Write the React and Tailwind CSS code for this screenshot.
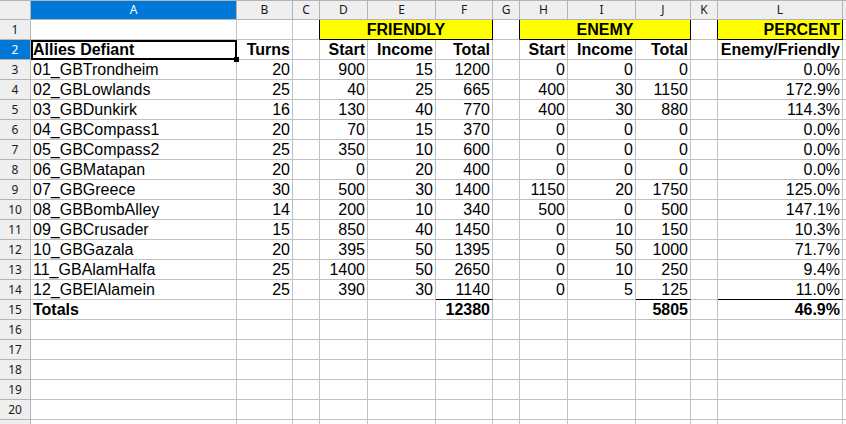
import React from "react";

const COLS = ["A", "B", "C", "D", "E", "F", "G", "H", "I", "J", "K", "L", ""];

const DATA = [
  ["01_GBTrondheim", 20, 900, 15, 1200, 0, 0, 0, "0.0%"],
  ["02_GBLowlands", 25, 40, 25, 665, 400, 30, 1150, "172.9%"],
  ["03_GBDunkirk", 16, 130, 40, 770, 400, 30, 880, "114.3%"],
  ["04_GBCompass1", 20, 70, 15, 370, 0, 0, 0, "0.0%"],
  ["05_GBCompass2", 25, 350, 10, 600, 0, 0, 0, "0.0%"],
  ["06_GBMatapan", 20, 0, 20, 400, 0, 0, 0, "0.0%"],
  ["07_GBGreece", 30, 500, 30, 1400, 1150, 20, 1750, "125.0%"],
  ["08_GBBombAlley", 14, 200, 10, 340, 500, 0, 500, "147.1%"],
  ["09_GBCrusader", 15, 850, 40, 1450, 0, 10, 150, "10.3%"],
  ["10_GBGazala", 20, 395, 50, 1395, 0, 50, 1000, "71.7%"],
  ["11_GBAlamHalfa", 25, 1400, 50, 2650, 0, 10, 250, "9.4%"],
  ["12_GBElAlamein", 25, 390, 30, 1140, 0, 5, 125, "11.0%"],
];

const GRID = "grid";
const BLACK = "black";

const ALIGN = {
  left: "text-left",
  right: "text-right",
  center: "text-center",
};

function Cell({ children, align = "left", right, bold, r = GRID, b = GRID, span = "", extra = "" }) {
  const a = right ? "right" : align;
  return (
    <div
      className={[
        "relative border-r border-b px-[2px] overflow-hidden whitespace-nowrap text-[16px] leading-[19px] text-black font-['Liberation_Sans',Arial,sans-serif]",
        ALIGN[a],
        bold ? "font-bold" : "font-normal",
        r === BLACK ? "border-r-black" : "border-r-[#c0c0c0]",
        b === BLACK ? "border-b-black" : "border-b-[#c0c0c0]",
        span,
        extra,
      ].join(" ")}
    >
      {children}
    </div>
  );
}

function RowHead({ n, active }) {
  return (
    <div
      className={[
        "border-r border-b border-[#b4b4b4] text-center text-[12px] leading-[19px] font-['Noto_Sans',sans-serif]",
        active ? "bg-[#0078d7] text-white" : "bg-[#efefef] text-[#1a1a1a]",
      ].join(" ")}
    >
      {n}
    </div>
  );
}

function EmptyRow({ n }) {
  return (
    <>
      <RowHead n={n} />
      {COLS.map((c, i) => (
        <Cell key={i} />
      ))}
    </>
  );
}

export default function App() {
  return (
    <div className="w-[846px] h-[424px] overflow-hidden bg-white">
      <div className="grid grid-cols-[31px_206px_56px_27px_48px_68px_57px_27px_48px_68px_55px_27px_125px_1fr] auto-rows-[20px]">
        {/* column letters */}
        <div className="bg-[#efefef] border-t border-r border-b border-[#b4b4b4]" />
        {COLS.map((c, i) => (
          <div
            key={c || "m"}
            className={[
              "border-t border-r border-b border-[#b4b4b4] text-center text-[12px] leading-[18px] font-['Noto_Sans',sans-serif]",
              i === 0 ? "bg-[#0078d7] text-white" : "bg-[#efefef] text-[#1a1a1a]",
            ].join(" ")}
          >
            {c}
          </div>
        ))}

        {/* row 1: group captions */}
        <RowHead n={1} />
        <Cell />
        <Cell />
        <Cell r={BLACK} />
        <Cell span="col-span-3" r={BLACK} b={BLACK} bold align="center" extra="bg-[#ffff00]">
          FRIENDLY
        </Cell>
        <Cell r={BLACK} />
        <Cell span="col-span-3" r={BLACK} b={BLACK} bold align="center" extra="bg-[#ffff00]">
          ENEMY
        </Cell>
        <Cell r={BLACK} />
        <Cell r={BLACK} b={BLACK} bold right extra="bg-[#ffff00]">
          PERCENT
        </Cell>
        <Cell />

        {/* row 2: column titles */}
        <RowHead n={2} active />
        <Cell bold extra="overflow-visible">
          Allies Defiant
          <div className="absolute left-0 top-0 w-[206px] h-[20px] border-2 border-black pointer-events-none" />
          <div className="absolute left-[203px] top-[17px] w-[5px] h-[5px] bg-black z-10" />
        </Cell>
        <Cell bold right>Turns</Cell>
        <Cell />
        <Cell bold right>Start</Cell>
        <Cell bold right>Income</Cell>
        <Cell bold right>Total</Cell>
        <Cell />
        <Cell bold right>Start</Cell>
        <Cell bold right>Income</Cell>
        <Cell bold right>Total</Cell>
        <Cell />
        <Cell bold right>Enemy/Friendly</Cell>
        <Cell />

        {/* rows 3-14: scenarios */}
        {DATA.map((row, idx) => {
          const last = idx === DATA.length - 1;
          return (
            <React.Fragment key={row[0]}>
              <RowHead n={idx + 3} />
              <Cell>{row[0]}</Cell>
              <Cell right>{row[1]}</Cell>
              <Cell />
              <Cell right>{row[2]}</Cell>
              <Cell right>{row[3]}</Cell>
              <Cell right b={last ? BLACK : GRID}>{row[4]}</Cell>
              <Cell />
              <Cell right>{row[5]}</Cell>
              <Cell right>{row[6]}</Cell>
              <Cell right b={last ? BLACK : GRID}>{row[7]}</Cell>
              <Cell />
              <Cell right b={last ? BLACK : GRID}>{row[8]}</Cell>
              <Cell />
            </React.Fragment>
          );
        })}

        {/* row 15: totals */}
        <RowHead n={15} />
        <Cell bold>Totals</Cell>
        <Cell />
        <Cell />
        <Cell />
        <Cell />
        <Cell bold right>12380</Cell>
        <Cell />
        <Cell />
        <Cell />
        <Cell bold right>5805</Cell>
        <Cell />
        <Cell bold right>46.9%</Cell>
        <Cell />

        {[16, 17, 18, 19, 20].map((n) => (
          <EmptyRow key={n} n={n} />
        ))}
        {/* next row, only its top edge is in view */}
        <EmptyRow n="" />
      </div>
    </div>
  );
}
